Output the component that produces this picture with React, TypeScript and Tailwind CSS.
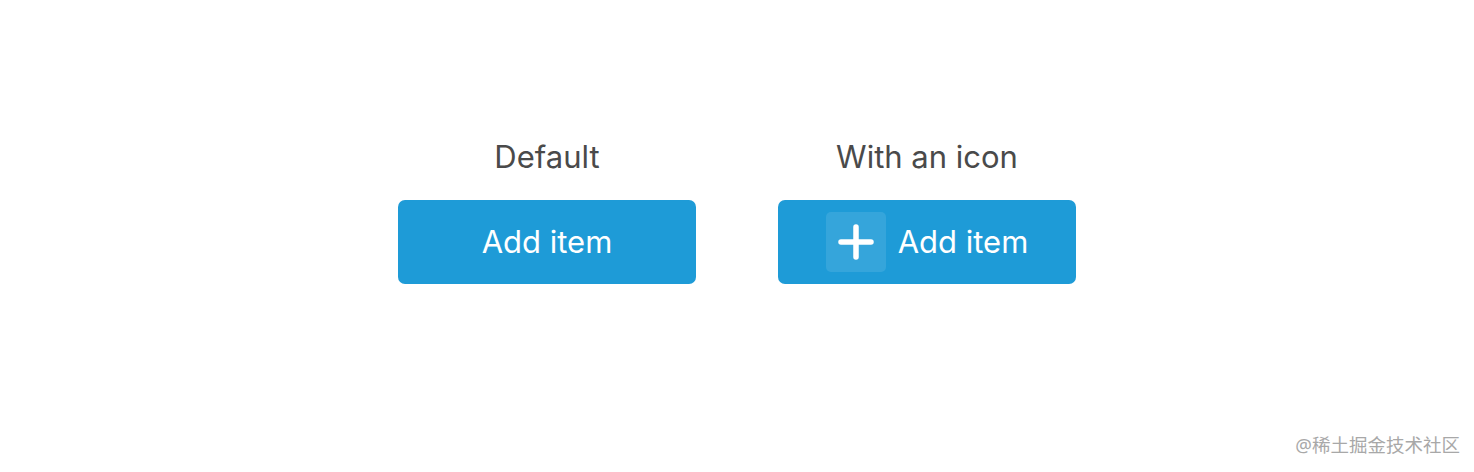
export default function App() {
  return (
    <div
      className="relative w-full h-[472px] bg-white"
      style={{ fontFamily: "Inter, 'Noto Sans', sans-serif" }}
    >
      <div className="flex justify-center gap-[82px] pt-[137px]">
        {/* default */}
        <div className="flex flex-col items-center w-[298px]">
          <div className="text-[31px] leading-[40px] text-[#4a4a4a]">Default</div>
          <button className="mt-[23px] w-[298px] h-[84px] rounded-[7px] bg-[#1e9bd7] text-white text-[31px] flex items-center justify-center">
            Add item
          </button>
        </div>

        {/* with icon */}
        <div className="flex flex-col items-center w-[298px]">
          <div className="text-[31px] leading-[40px] text-[#4a4a4a]">With an icon</div>
          <button className="mt-[23px] w-[298px] h-[84px] rounded-[7px] bg-[#1e9bd7] text-white text-[31px] flex items-center justify-center gap-[12px]">
            <span className="w-[60px] h-[60px] rounded-[5px] bg-white/10 flex items-center justify-center">
              <svg width="36" height="36" viewBox="0 0 36 36" fill="none">
                <path d="M18 3v30M3 18h30" stroke="white" strokeWidth="5.5" strokeLinecap="round" />
              </svg>
            </span>
            Add item
          </button>
        </div>
      </div>

      <div
        className="absolute right-[14px] bottom-[13px] text-[18.5px] text-[#a8a8a8]"
        style={{ fontFamily: "'Noto Sans', 'Noto Sans CJK SC', sans-serif" }}
      >
        @稀土掘金技术社区
      </div>
    </div>
  );
}
